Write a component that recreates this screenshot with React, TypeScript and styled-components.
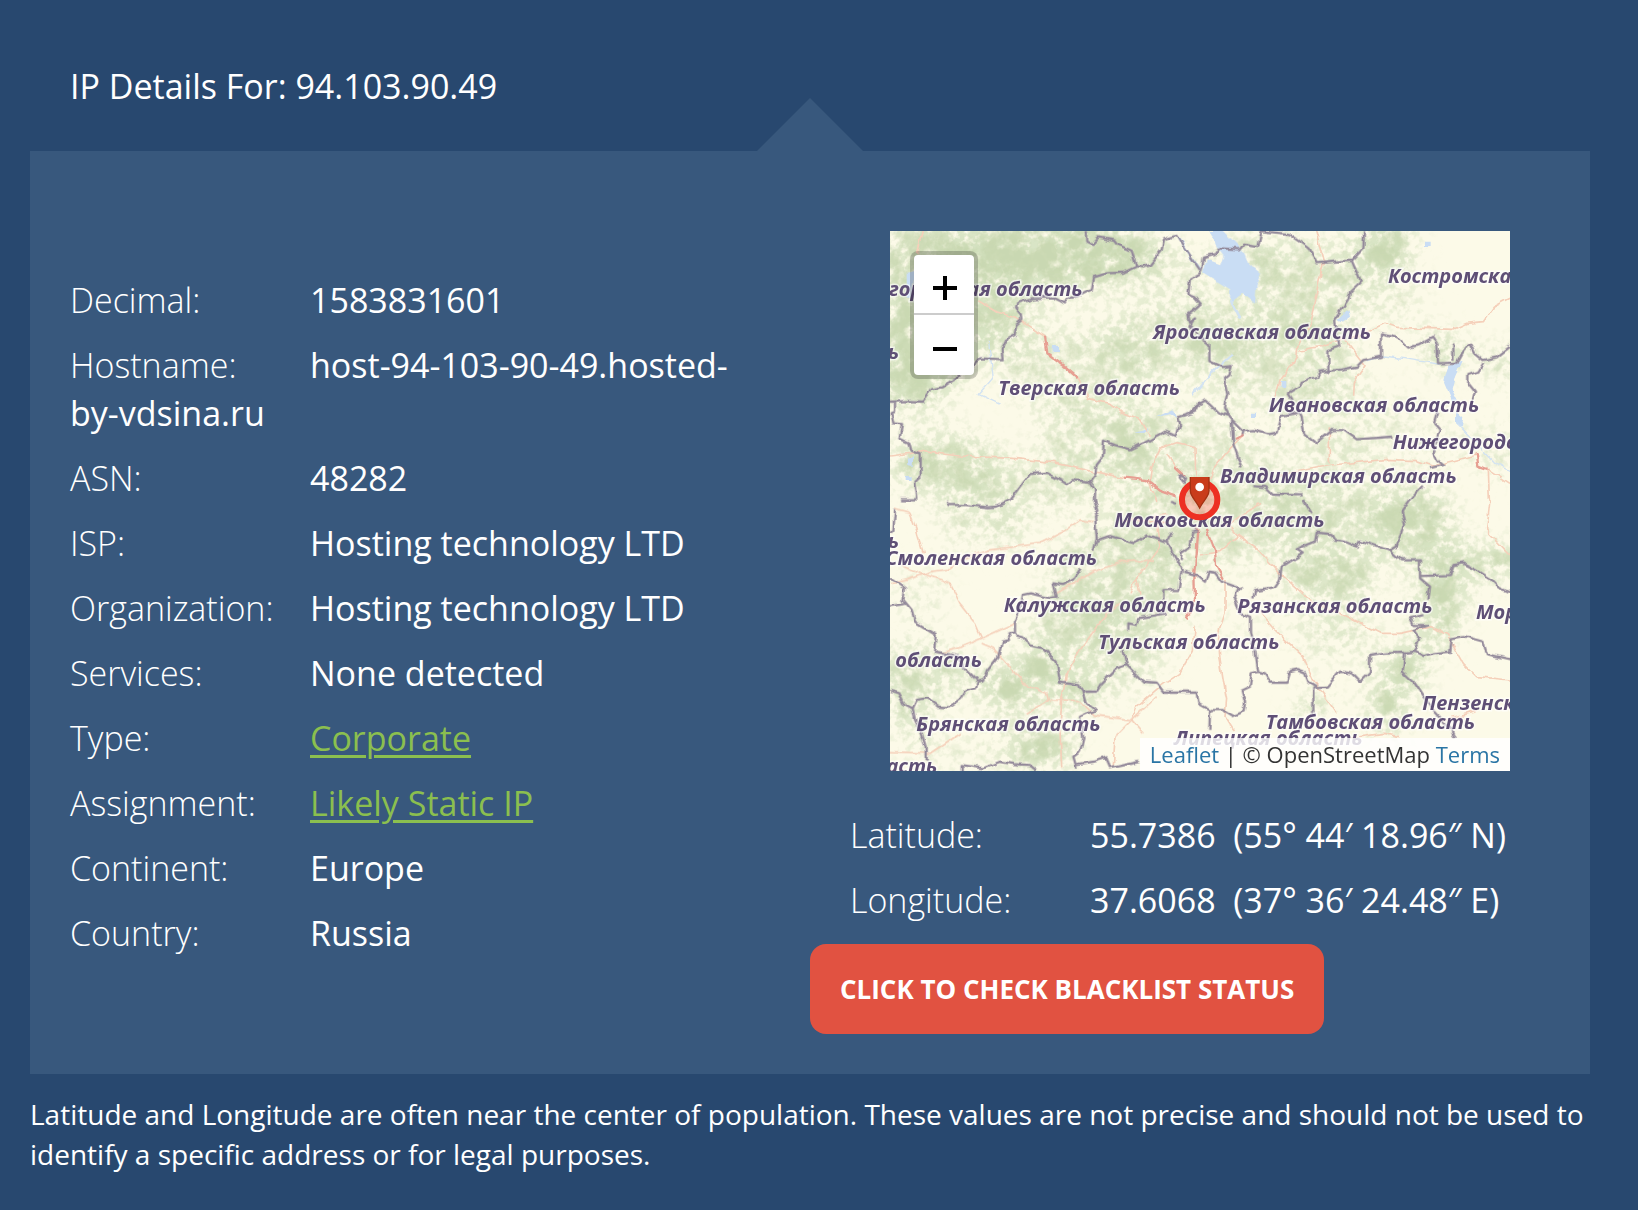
import React from 'react';
import styled, { createGlobalStyle } from 'styled-components';

const GlobalStyle = createGlobalStyle`
  *, *::before, *::after { box-sizing: border-box; }
  body {
    margin: 0;
    background: #28486f;
    color: #fff;
    font-family: "Open Sans", "Noto Sans", sans-serif;
  }
`;

const Page = styled.main`
  padding: 62px 48px 40px 30px;
`;

const Title = styled.h1`
  margin: 0;
  padding: 0 40px 41px;
  font-size: 34px;
  font-weight: 400;
  line-height: 48px;
`;

const Panel = styled.section`
  position: relative;
  display: grid;
  grid-template-columns: 1fr 1fr;
  padding: 80px 0 40px;
  background: #38587d;

  &::before {
    content: "";
    position: absolute;
    bottom: 100%;
    left: 50%;
    margin-left: -53px;
    border: 53px solid transparent;
    border-top-width: 0;
    border-bottom-color: #38587d;
  }
`;

const Column = styled.div`
  min-width: 0;
`;

const DetailList = styled.dl<{ $top: number }>`
  display: grid;
  gap: 17px;
  margin: 0;
  padding: ${({ $top }) => $top}px 40px 20px;
  font-size: 34px;
  line-height: 48px;
`;

const Term = styled.dt`
  float: left;
  width: 240px;
  font-weight: 300;
`;

const Value = styled.dd`
  display: inline;
  margin: 0;
  font-weight: 500;
  white-space: pre-wrap;
`;

const ValueLink = styled.a`
  color: #8bbf4f;
  font-weight: 400;
  text-decoration: underline;
  text-decoration-thickness: 3px;
  text-underline-offset: 4px;
`;

const MapFrame = styled.div`
  position: relative;
  height: 540px;
  margin: 0 80px;
  overflow: hidden;
  background: #fcfae8;
`;

const MapCanvas = styled.svg`
  display: block;
  width: 100%;
  height: 100%;
`;

const ZoomControl = styled.div`
  position: absolute;
  top: 20px;
  left: 20px;
  display: grid;
  border: 4px solid rgba(0, 0, 0, 0.2);
  border-radius: 8px;
  background: #fff;
  background-clip: padding-box;
  overflow: hidden;
`;

const ZoomButton = styled.button`
  width: 60px;
  height: 60px;
  padding: 8px 0 0 2px;
  border: 0;
  background: transparent;
  cursor: pointer;

  &:first-child { border-bottom: 2px solid #ccc; }
  svg { display: block; margin: auto; }
`;

const Attribution = styled.div`
  position: absolute;
  right: 0;
  bottom: 0;
  padding: 0 10px;
  background: rgba(255, 255, 255, 0.8);
  color: #333;
  font-size: 22px;
  line-height: 33px;

  a { color: #2a75a5; text-decoration: none; }
`;

const BlacklistButton = styled.button`
  height: 90px;
  padding: 0 30px;
  border: 0;
  border-radius: 16px;
  background: #e15241;
  color: #fff;
  font: 700 26px/36px "Open Sans", "Noto Sans", sans-serif;
  text-transform: uppercase;
  cursor: pointer;
`;

const Note = styled.p`
  margin: 20px 0 0;
  font-size: 28px;
  line-height: 40px;
`;

/* Each patch of forest: centre x, centre y, radius x, radius y, density. */
const forests: number[][] = [
  [470, 70, 330, 100, 0.92], [120, 110, 150, 140, 0.8], [120, 320, 150, 130, 0.9],
  [60, 460, 110, 60, 0.85], [330, 240, 80, 120, 0.8], [560, 420, 200, 120, 0.6],
  [820, 330, 170, 90, 0.7], [1080, 60, 60, 60, 0.6], [850, 110, 110, 60, 0.5],
  [1250, 180, 170, 150, 0.68], [1180, 400, 210, 120, 0.62], [1000, 280, 90, 100, 0.55],
  [1480, 50, 70, 70, 0.95], [1530, 220, 50, 50, 0.5], [1660, 362, 36, 34, 1],
  [170, 700, 160, 80, 0.8], [420, 770, 220, 50, 0.65], [620, 640, 160, 100, 0.6],
  [860, 630, 200, 110, 0.55], [950, 860, 260, 140, 0.66], [1240, 720, 200, 90, 0.5],
  [1330, 860, 170, 70, 0.7], [1320, 1030, 130, 70, 0.82], [1570, 870, 110, 100, 0.85],
  [1790, 990, 120, 35, 0.85], [1810, 660, 60, 60, 0.55], [1835, 400, 30, 40, 0.75],
  [1650, 1100, 55, 130, 0.92], [1550, 1310, 40, 50, 1], [1490, 1420, 40, 80, 0.9],
  [680, 1030, 190, 130, 0.7], [560, 1180, 120, 80, 0.72], [700, 1290, 100, 70, 0.68],
  [350, 1370, 75, 50, 0.95], [450, 1310, 50, 60, 0.95], [560, 1385, 65, 35, 0.9],
  [450, 1550, 90, 50, 0.9], [90, 1320, 120, 70, 0.74], [60, 1440, 50, 60, 0.7],
  [90, 1090, 60, 50, 0.5], [210, 880, 40, 50, 0.6], [350, 895, 35, 35, 0.8],
  [760, 1180, 60, 50, 0.6], [1290, 1210, 40, 60, 0.6], [1400, 1210, 40, 50, 0.6],
  [1270, 1430, 30, 25, 0.9], [1500, 620, 190, 60, 0.45], [1350, 510, 170, 40, 0.45],
  [200, 1560, 150, 30, 0.45], [1040, 1180, 160, 40, 0.3],
];

const roads: [string, string][] = [
  ['-30 -33', 'M130 33 L112 100 M295 242 L350 275 L410 295 L495 350 M590 468 L625 535 L690 550 L725 580 L780 600 L808 650 M30 708 L130 695 L240 708 L400 715 L520 728 L640 755 L735 773 M840 685 L815 740 L808 790 L830 840 M840 685 L890 668 L945 680 L948 790 M860 700 L890 742'],
  ['930 -33', 'M350 33 L372 120 L350 215 L325 330 L295 370 L290 410 L240 480 L228 530 M300 390 L360 380 L430 355 L480 420 L495 440 L460 490 L458 530 M450 360 L555 310 L590 322 L760 328 L800 310 L850 305 L880 262 L930 235 M130 645 L95 680 L40 745 L25 790 M388 625 L388 730 M240 765 L395 735 L560 718 L650 722 L700 738 L830 705 M860 745 L930 790 M865 750 L868 840'],
  ['-30 807', 'M45 28 L90 40 L110 90 L130 160 M30 252 L85 240 L150 215 L205 208 L240 178 L330 150 L480 130 L545 98 L600 60 L640 65 M65 195 L120 220 L190 240 L210 250 L240 310 L280 360 L305 415 L240 442 L180 460 M305 415 L405 370 M305 430 L340 445 L380 490 L430 550 L500 580 L505 600 L440 640 M505 602 L600 605 L640 645 L755 660 L830 590 M545 600 L540 690 L545 800 M545 600 L560 520 L600 450 L680 340 L720 310 M530 280 L640 215 L730 185 L825 180 M825 50 L840 140 L770 235 L750 280 M770 235 L780 285 M755 660 L790 700 M755 660 L705 710 L700 800 M30 755 L150 760 L240 700'],
  ['930 807', 'M60 50 L110 105 L175 150 L240 220 L330 300 L430 345 L540 400 L600 400 L690 380 L740 400 L790 490 L830 530 L930 540 M75 240 L75 340 L55 400 L60 480 L80 600 L75 650 L100 690 M165 320 L220 385 L310 470 L340 540 L410 640 M120 105 L60 155 L0 165 M870 0 L860 90 L930 165 M720 660 L830 635 M410 720 L550 700 L600 710'],
  ['570 807', 'M345 380 L340 450 L300 520 L240 560 L170 620 L155 660 M120 60 L260 68 M180 70 L260 40 M440 80 L540 10'],
];

const mainRoads: [string, string][] = [
  ['-30 -33', 'M495 350 L502 400 L550 435 L590 468 M735 773 L800 780 L840 812 L890 830 M885 742 L915 770'],
  ['570 807', 'M355 85 L350 160 L343 215 L345 310 L320 355 M380 85 L405 150 L408 195 L432 237'],
  ['930 -33', 'M105 657 L130 645 M830 700 L835 740 L862 750'],
];

const borders: [string, string][] = [
  ['-30 -33', 'M620 33 L622 65 L638 72 L655 52 L705 62 L715 75 L755 92 L768 138 L790 142 L810 135 L845 90 L852 58 L892 47 L912 80 L960 150 M768 140 L730 158 L680 160 L642 172 L635 210 L612 222 L560 238 L555 250 L520 232 L455 235 L412 248 L408 262 L422 280 L424 300 L408 315 L404 348 L378 362 L365 392 L368 418 L300 415 L285 432 L280 445 L235 470 L210 485 L185 502 L155 508 L148 520 L130 545 L85 543 L30 545 M45 545 L45 575 L35 580 L40 610 L66 612 L58 655 L85 668 L90 690 L122 703 L122 770 L106 785 L112 840 M960 545 L945 575 L895 592 L900 612 L890 648 L855 635 L810 660 L752 688 L705 675 L672 662 L668 712 L650 735 L645 765 L630 785 L575 780 L560 792 L500 758 L450 762 L425 795 L390 842 M630 785 L645 810 L645 845 M60 838 L115 838 M905 765 L918 775 L912 788 L902 775 Z'],
  ['570 0', 'M365 120 L372 80 L405 72 L418 52 L480 55 L492 38 L535 45 L545 0 M365 120 L355 132 L330 145 L325 188 L345 195 L365 218 L340 240 L325 250 L330 275 L345 262 L328 290 L350 310 L388 340 L388 390 L425 408 L455 405 L448 430 L435 440 L445 490 L435 530 L450 560 L490 600 L488 612 M450 555 L415 545 L375 508 L350 525 L330 548 M490 600 L520 597 L565 610 L590 605 L602 555 L655 545 M455 570 L460 640 L478 690 L485 715 M520 765 L555 768 L575 788 L665 790'],
  ['930 -33', 'M185 33 L265 42 L305 70 L325 85 L350 130 L400 125 L455 122 L490 85 L492 33 M455 122 L482 185 L450 215 L445 240 L405 300 L415 380 L385 390 L385 460 M262 520 L300 498 L305 485 L350 470 L360 455 L410 450 L470 440 L490 420 L543 410 L543 340 L590 350 L625 383 L655 375 L700 350 L712 370 L714 430 L770 428 L785 400 L810 368 L825 400 L850 420 L890 412 L930 380 M262 520 L275 540 M298 575 L305 590 L312 640 L348 668 L395 630 L430 630 L470 658 L580 650 M850 430 L835 455 L805 465 L805 490 L825 515 L815 545 M715 575 L705 610 L722 630 L700 700 L712 720 L730 735 L690 745 M668 800 L630 840 M760 370 L760 420'],
  ['-30 807', 'M200 5 L205 15 L260 15 L325 22 L350 20 L390 0 M45 30 L40 90 L30 100 M645 0 L655 35 L645 45 L650 120 L640 155 M605 205 L585 235 L550 255 L520 250 L530 290 L510 295 L450 280 L425 285 L420 335 L405 365 L405 400 L385 403 L390 420 L365 425 L355 470 L320 515 L312 540 L290 545 L285 565 L255 575 L240 600 L210 622 L175 620 L140 595 L110 600 L98 625 L70 610 L55 580 L30 572 M290 540 L250 500 L235 470 L165 455 L170 405 L105 365 L95 330 L70 300 L75 265 L30 232 M30 318 L75 312 M98 625 L105 660 L125 700 L137 740 L137 780 M405 405 L430 412 L445 435 L490 445 L530 485 L540 545 L600 552 L610 575 L650 575 M650 122 L690 108 L765 130 L800 103 L860 125 L905 210 L895 270 L850 270 L850 300 M860 125 L875 95 M650 575 L665 550 L710 505 L740 495 L730 450 M745 390 L745 370 L770 375 L775 355 L860 340 M610 575 L620 610 L645 630 L600 650 L610 715 L600 755 L580 770 L590 805 M245 812 L245 795 L310 805 L360 785 L400 792 L450 795 L470 812 M590 792 L640 785 L680 772 L690 805 L780 785 M740 495 L790 545 L830 548 L850 575 L950 575'],
  ['570 807', 'M310 215 L350 225 L375 245 L385 215 L405 218 L425 245 L480 265 L465 295 L480 340 L510 350 L510 400 L525 450 L535 515 L515 520 L510 560 L485 572 L495 610 L490 635 L460 648 L430 630 L390 630 L355 610 L350 575 M390 630 L388 690 M302 180 L305 155 L330 140 L340 95 L355 90 M270 5 L290 12 M535 515 L555 520 L572 548 L620 548 L630 515 L650 510 L675 520 L685 545 L710 560'],
  ['930 807', 'M160 295 L165 270 L220 262 L240 235 L245 200 L290 172 L308 160 L290 148 L345 125 L350 98 L395 102 L405 122 L435 125 L470 140 L480 122 L570 152 L590 140 L615 75 L605 35 L630 0 M335 40 L310 0 M570 152 L600 178 L660 178 L660 235 L690 260 L685 300 M670 345 L630 355 L640 375 L680 375 L640 390 L660 415 L645 455 L615 458 L608 515 L640 545 L670 590 L700 630 L755 690 L765 715 M660 228 L750 225 L760 195 L790 190 L830 210 L870 235 L895 262 L930 278 M645 455 L670 468 L700 460 L750 455 L755 415 L790 408 L850 425 L860 462 L930 478 M615 455 L550 458 L510 465 L510 515 L480 545 L455 520 L420 515 L380 560 L340 562 L340 640'],
];

/* Region names: left edge x, baseline y, text. */
const regions: [number, number, string][] = [
  [-114, 194, 'Новгородская область'], [1494, 157, 'Костромская область'],
  [790, 325, 'Ярославская область'], [325, 493, 'Тверская область'],
  [1136, 542, 'Ивановская область'], [1508, 655, 'Нижегородская область'],
  [990, 756, 'Владимирская область'], [673, 889, 'Московская область'],
  [-14, 1003, 'Смоленская область'], [341, 1142, 'Калужская область'],
  [1042, 1146, 'Рязанская область'], [1758, 1165, 'Мордовия'],
  [625, 1254, 'Тульская область'], [16, 1309, 'область'],
  [79, 1499, 'Брянская область'], [1597, 1436, 'Пензенская область'],
  [1127, 1495, 'Тамбовская область'], [852, 1543, 'Липецкая область'],
  [-118, 1625, 'область'], [-233, 385, 'область'], [-233, 950, 'область'],
];

const RegionMap = () => (
  <MapCanvas viewBox="0 0 1860 1620" preserveAspectRatio="xMidYMid slice" role="img" aria-label="Map of the Moscow region">
    <defs>
      <filter id="woods" filterUnits="userSpaceOnUse" x="0" y="0" width="1860" height="1620" colorInterpolationFilters="sRGB">
        <feGaussianBlur in="SourceAlpha" stdDeviation="22" result="density" />
        <feTurbulence type="fractalNoise" baseFrequency="0.018" numOctaves="4" seed="7" result="noise" />
        <feComposite in="density" in2="noise" operator="arithmetic" k1="0" k2="0.6" k3="1" k4="-0.42" result="sum" />
        <feColorMatrix in="sum" type="matrix" values="0 0 0 0 0.784  0 0 0 0 0.843  0 0 0 0 0.69  0 0 0 3.2 -1.2" result="color" />
        <feComposite in="color" in2="density" operator="in" result="patches" />
        <feGaussianBlur in="patches" stdDeviation="2" />
      </filter>
      <filter id="meadow" filterUnits="userSpaceOnUse" x="0" y="0" width="1860" height="1620" colorInterpolationFilters="sRGB">
        <feGaussianBlur in="SourceAlpha" stdDeviation="40" result="density" />
        <feTurbulence type="fractalNoise" baseFrequency="0.045" numOctaves="3" seed="19" result="noise" />
        <feComposite in="density" in2="noise" operator="arithmetic" k1="0" k2="0.35" k3="1" k4="-0.3" result="sum" />
        <feColorMatrix in="sum" type="matrix" values="0 0 0 0 0.84  0 0 0 0 0.89  0 0 0 0 0.76  0 0 0 4 -1.25" result="color" />
        <feComposite in="color" in2="density" operator="in" result="patches" />
        <feGaussianBlur in="patches" stdDeviation="2" />
      </filter>
      <filter id="rough" filterUnits="userSpaceOnUse" x="-40" y="-40" width="1940" height="1700">
        <feTurbulence type="fractalNoise" baseFrequency="0.04" numOctaves="1" seed="3" />
        <feDisplacementMap in="SourceGraphic" scale="20" xChannelSelector="R" yChannelSelector="G" result="bent" />
        <feGaussianBlur in="bent" stdDeviation="1" />
      </filter>
      <clipPath id="pinTop"><rect x="880" y="738" width="100" height="110" /></clipPath>
    </defs>

    <rect width="1860" height="1620" fill="#fcfae8" />
    <g filter="url(#meadow)">
      {forests.map(([x, y, rx, ry, d], i) => (
        <ellipse key={i} cx={x} cy={y} rx={rx + 40} ry={ry + 40} opacity={d} />
      ))}
    </g>
    <g filter="url(#woods)">
      {forests.map(([x, y, rx, ry, d], i) => (
        <ellipse key={i} cx={x} cy={y} rx={rx} ry={ry} opacity={d} />
      ))}
    </g>

    <g filter="url(#rough)">
      <g fill="#c9ddf4">
        <path transform="translate(570 0)" d="M385 0 L428 0 L455 25 L490 60 L505 95 L545 130 L530 165 L525 215 L490 185 L465 205 L450 220 L450 175 L370 125 L380 85 L420 100 L430 75 L415 55 Z" />
        <path transform="translate(930 -33)" d="M745 435 L785 425 L765 470 L755 510 L770 540 L760 550 L732 485 Z M768 575 L790 595 L785 618 L768 610 Z M412 300 L445 270 L450 290 L425 308 Z" />
        <path d="M1172 450 h20 v18 h-20 Z M1080 545 h18 v16 h-18 Z M485 342 h22 v24 h-22 Z M50 125 L75 120 L72 200 L50 200 Z M1602 32 h20 v16 h-20 Z" />
        <path d="M795 560 L850 535 L862 560 L840 550 Z M740 605 L775 592 L770 606 Z M50 680 L70 675 L68 705 L52 702 Z M50 735 h12 v12 h-12 Z" />
      </g>
      <g fill="none" stroke="#d3e3f2" strokeWidth="6">
        <path d="M867 20 L900 75 L932 116 M1020 205 L1050 260" strokeWidth="9" />
        <path d="M1030 370 L960 430 L910 490" />
        <path d="M295 330 L310 440 L265 490 L330 520 M1430 390 L1480 375 L1560 385 L1650 400 M1700 575 L1810 690 L1860 720" strokeWidth="4" />
      </g>
      <g fill="none" stroke="#f5d0ba" strokeWidth="5" strokeLinejoin="round">
        {roads.map(([at, d]) => <path key={at} transform={`translate(${at})`} d={d} />)}
      </g>
      <g fill="none" stroke="#e79f92" strokeWidth="7" strokeLinejoin="round">
        {mainRoads.map(([at, d]) => <path key={at} transform={`translate(${at})`} d={d} />)}
      </g>
      <g fill="none" stroke="#93899a" strokeWidth="7" strokeLinejoin="round">
        {borders.map(([at, d]) => <path key={at} transform={`translate(${at})`} d={d} />)}
      </g>
    </g>

    <g
      fill="#5f4f76"
      stroke="#fff"
      strokeOpacity="0.6"
      strokeWidth="9"
      paintOrder="stroke"
      fontFamily='"Open Sans", "Noto Sans", sans-serif'
      fontSize="60"
      fontWeight="700"
      fontStyle="italic"
    >
      {regions.map(([x, y, name]) => <text key={`${x} ${y}`} x={x} y={y}>{name}</text>)}
    </g>

    <circle cx="929" cy="806" r="53" fill="#ee2f24" fillOpacity="0.25" stroke="#ed3023" strokeWidth="18" />
    <g clipPath="url(#pinTop)">
      <path d="M901 736 H957 V780 C957 796 940 808 929 831 C918 808 901 796 901 780 Z" fill="#c93c1b" stroke="#a33213" strokeWidth="4" />
      <circle cx="929" cy="768" r="13" fill="#fff" />
    </g>
  </MapCanvas>
);

const details: [string, React.ReactNode][] = [
  ['Decimal:', '1583831601'],
  ['Hostname:', 'host-94-103-90-49.hosted-by-vdsina.ru'],
  ['ASN:', '48282'],
  ['ISP:', 'Hosting technology LTD'],
  ['Organization:', 'Hosting technology LTD'],
  ['Services:', 'None detected'],
  ['Type:', <ValueLink href="#corporate">Corporate</ValueLink>],
  ['Assignment:', <ValueLink href="#static-ip">Likely Static IP</ValueLink>],
  ['Continent:', 'Europe'],
  ['Country:', 'Russia'],
];

const coordinates: [string, React.ReactNode][] = [
  ['Latitude:', '55.7386\u00a0 (55° 44′ 18.96″ N)'],
  ['Longitude:', '37.6068\u00a0 (37° 36′ 24.48″ E)'],
];

const Details = ({ items, top }: { items: [string, React.ReactNode][]; top: number }) => (
  <DetailList $top={top}>
    {items.map(([term, value]) => (
      <div key={term}>
        <Term>{term}</Term>
        <Value>{value}</Value>
      </div>
    ))}
  </DetailList>
);

export default function App() {
  return (
    <>
      <GlobalStyle />
      <Page>
        <Title>IP Details For: 94.103.90.49</Title>
        <Panel>
          <Column>
            <Details items={details} top={45} />
          </Column>
          <Column>
            <MapFrame>
              <RegionMap />
              <ZoomControl>
                <ZoomButton type="button" aria-label="Zoom in">
                  <svg width="24" height="24" viewBox="0 0 24 24" stroke="#000" strokeWidth="4">
                    <path d="M12 0v24M0 12h24" />
                  </svg>
                </ZoomButton>
                <ZoomButton type="button" aria-label="Zoom out">
                  <svg width="24" height="24" viewBox="0 0 24 24" stroke="#000" strokeWidth="4">
                    <path d="M0 12h24" />
                  </svg>
                </ZoomButton>
              </ZoomControl>
              <Attribution>
                <a href="#leaflet">Leaflet</a> | © OpenStreetMap <a href="#terms">Terms</a>
              </Attribution>
            </MapFrame>
            <Details items={coordinates} top={40} />
            <BlacklistButton type="button">Click to check blacklist status</BlacklistButton>
          </Column>
        </Panel>
        <Note>
          Latitude and Longitude are often near the center of population. These values are not precise and
          should not be used to identify a specific address or for legal purposes.
        </Note>
      </Page>
    </>
  );
}
